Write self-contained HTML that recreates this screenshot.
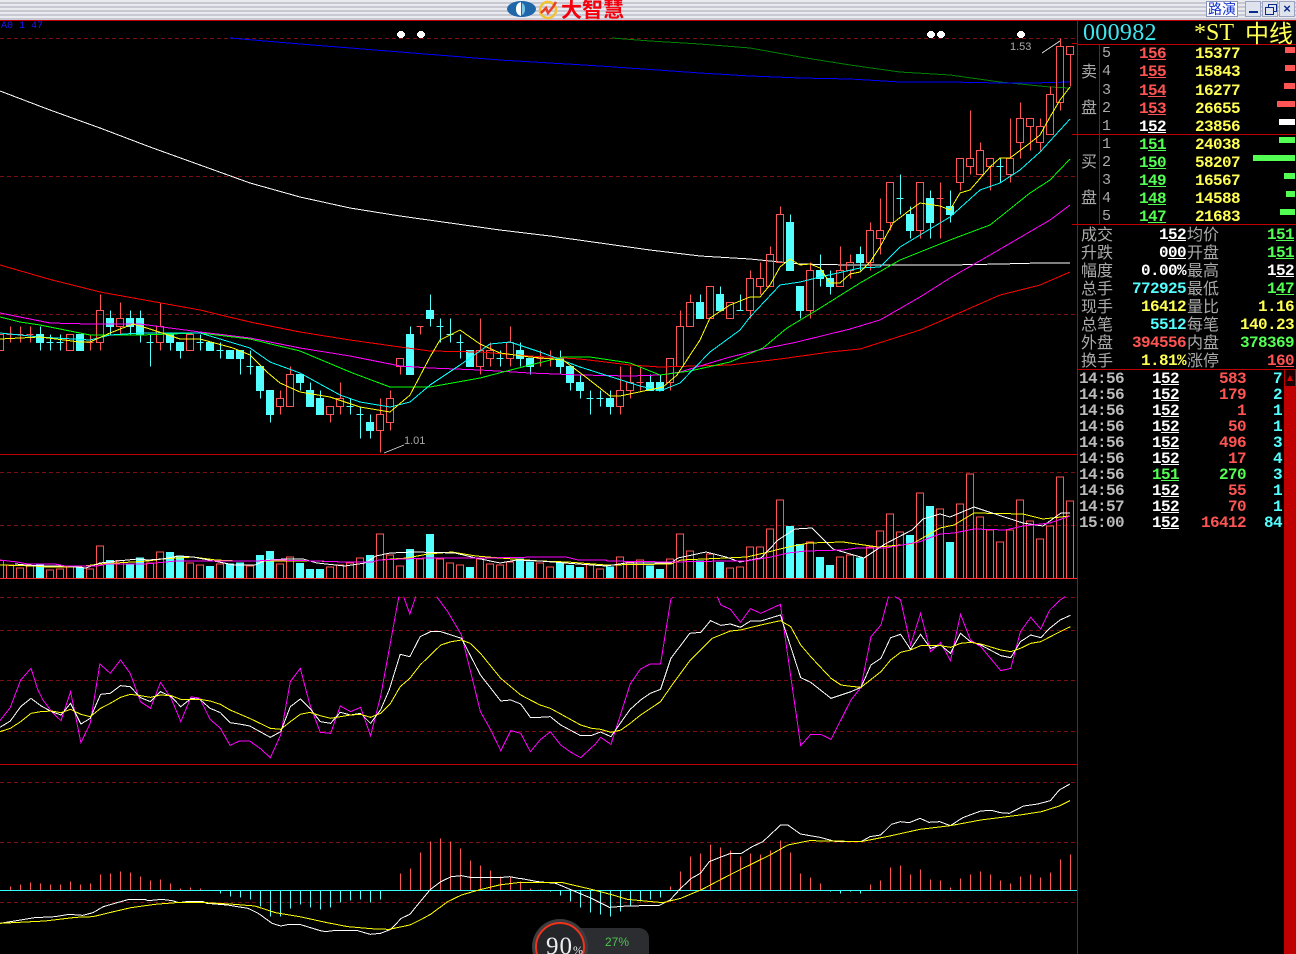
<!DOCTYPE html>
<html lang="zh">
<head>
<meta charset="utf-8">
<title>大智慧</title>
<style>
html,body{margin:0;padding:0;background:#000;width:1296px;height:954px;overflow:hidden}
#a{position:relative;width:1296px;height:954px;overflow:hidden;background:#000}
svg.c{position:absolute;left:0;top:0}
svg.c *{vector-effect:non-scaling-stroke;shape-rendering:crispEdges}
.r{fill:none;stroke:#ff5454;stroke-width:1}
.b{fill:#54ffff;stroke:#54ffff;stroke-width:1}
.l{fill:none;stroke-width:1}
.d{stroke:#7a0f0f;stroke-width:1;stroke-dasharray:4 3}
.s{stroke:#c00000;stroke-width:1}
.t{position:absolute;margin-top:1px;font:bold 16px/18px "Liberation Mono",monospace;letter-spacing:-.6px;white-space:pre}
.n{position:absolute;margin-top:1px;font:15px/18px "Liberation Mono",monospace;color:#aaa}
.h{position:absolute;margin-top:-1px;font:16px/18px "Noto Sans CJK SC",sans-serif;color:#aaa;white-space:pre}
.R{color:#ff5454}.G{color:#54ff54}.Y{color:#ffff54}.C{color:#54ffff}.W{color:#fff}.A{color:#bbb}
.q{position:absolute;height:6px;right:1px}
#tb{position:absolute;left:0;top:0;width:1296px;height:20px;background:repeating-linear-gradient(#e9e9f0 0 2px,#c7c8d2 2px 4px)}
.btn{position:absolute;top:1px;height:16px;background:#dfe3ee;border:1px solid #9aa3c0;box-sizing:border-box}
</style>
</head>
<body>
<div id="a">
<div id="tb"></div>

<svg class="c" width="1296" height="954" viewBox="0 0 1296 954">
<!-- frame -->
<path class="s" d="M0 20.5H1296M0 454.5H1077M0 764.5H1077M1077.5 20V954M1077 44.5H1296M1077 134.5H1296M1077 224.5H1296M1077 369.5H1296M1099.5 44V224"/>
<!-- dashed grids -->
<path class="d" d="M0 38.5H1077M0 176.5H1077M0 314.5H1077M0 472.5H1077M0 525.5H1077M0 597.5H1077M0 630.5H1077M0 680.5H1077M0 731.5H1077M0 782.5H1077M0 842.5H1077M0 902.5H1077"/>
<path class="s" d="M1072 43.5H1077M1072 134.5H1077M1072 224.5H1077"/>

<!-- long MAs -->
<polyline class="l" stroke="#fff" points="0,91 50,110 100,128 150,147 200,165 250,183 300,197 350,208 400,216 450,223 500,230 550,236 600,243 650,250 700,256 750,259 790,263 800,264 850,265 900,265 950,265 1000,264 1040,263 1070,263"/>
<polyline class="l" stroke="#007f00" points="612,38 650,41 700,44 750,48 800,57 850,65 900,72 950,75 1000,82 1050,87 1070,88"/>
<polyline class="l" stroke="#0000ff" points="230,38 300,44 400,52 500,60 600,66 700,73 750,76 800,78 850,79 900,82 950,82 1000,83 1033,83 1070,82"/>

<!-- candles A -->
<g transform="translate(.5,280.5) scale(.33333)">
<path class="r" d="M-12 162h21V210h-21zM18 162h21M30 138V186M48 162h21M60 138V186M78 162h21M90 138V186M198 162h21V210h-21zM258 186h21M270 162V210M288 90h21V186h-21zM300 42V90M300 186V210M348 114h21V138h-21zM360 66V114M360 138V162M468 138h21V186h-21zM480 66V138M480 186V210M558 162h21V210h-21zM828 354h21V378h-21zM840 330V354M840 378V402M858 282h21V378h-21zM870 258V282M978 378h21V402h-21zM990 402V426M1008 354h21V378h-21zM1020 306V354M1020 378V402M1128 402h21V450h-21zM1140 354V402M1140 450V516M1158 354h21V426h-21zM1170 330V354M1170 426V450M1188 234h21V258h-21zM1200 258V282M1248 138h21M1260 138V162"/>
<path class="b" d="M108 162h21V186h-21zM120 138V210M138 186h21M150 162V210M168 186h21M180 162V210M228 162h21V210h-21zM318 114h21V138h-21zM330 90V162M378 114h21V138h-21zM390 90V162M408 114h21V162h-21zM420 90V186M438 186h21M450 162V258M498 162h21V186h-21zM510 162V210M528 186h21V210h-21zM540 210V234M588 186h21M600 162V210M618 186h21V210h-21zM648 210h21M660 186V234M678 210h21V234h-21zM708 210h21V234h-21zM720 234V282M738 258h21M750 210V282M768 258h21V330h-21zM780 330V354M798 330h21V402h-21zM810 402V426M888 282h21V306h-21zM900 306V330M918 330h21V378h-21zM930 306V330M948 354h21V402h-21zM960 330V354M1038 378h21M1050 354V402M1068 402h21M1080 378V474M1098 426h21V450h-21zM1110 402V474M1218 162h21V282h-21zM1230 138V162"/>
</g>
<!-- candles B -->
<g transform="translate(430.5,280.5) scale(.33333)">
<path class="b" d="M-12 90h21V114h-21zM0 42V138M18 138h21M30 114V186M48 162h21M60 114V186M78 186h21M90 162V234M108 210h21V258h-21zM198 234h21M210 210V258M258 210h21V234h-21zM270 186V258M288 234h21V258h-21zM300 258V282M378 234h21V258h-21zM390 210V282M408 258h21V306h-21zM420 306V330M438 306h21V330h-21zM450 282V354M468 354h21M480 330V402M498 354h21M510 330V378M528 354h21V378h-21zM540 330V402M648 306h21V330h-21zM660 282V330M678 306h21V330h-21zM690 282V330M798 66h21V114h-21zM810 42V66M858 42h21V90h-21zM870 18V42M918 90h21M930 42V90"/>
<path class="r" d="M138 210h21V258h-21zM150 114V210M150 258V282M168 210h21V234h-21zM180 186V210M180 234V258M228 186h21V234h-21zM240 138V186M240 234V258M318 234h21M330 210V258M348 234h21M360 210V258M558 330h21V378h-21zM570 258V330M570 378V402M588 306h21V330h-21zM600 258V306M600 330V354M618 306h21M630 258V330M708 234h21V306h-21zM720 306V330M738 138h21V258h-21zM750 90V138M768 66h21V138h-21zM780 42V66M828 18h21V114h-21zM888 66h21V114h-21z"/>
</g>
<!-- candles C -->
<g transform="translate(750.5,20.5) scale(.33333)">
<path class="r" d="M-12 774h21V870h-21zM0 750V774M0 870V894M18 774h21V798h-21zM30 726V774M30 798V822M48 702h21V798h-21zM60 678V702M78 582h21V726h-21zM90 558V582M168 750h21V870h-21zM180 726V750M180 870V894M258 750h21V798h-21zM270 678V750M288 726h21V750h-21zM300 702V726M300 750V774M348 630h21V726h-21zM360 606V630M360 726V750M378 630h21V654h-21zM390 534V630M390 654V702M408 486h21V606h-21zM420 606V630M498 486h21V630h-21zM510 630V654M558 534h21M570 486V654M618 414h21V486h-21zM630 486V510M648 414h21V438h-21zM660 270V414M660 438V462M678 390h21V462h-21zM690 366V390M708 414h21V438h-21zM720 438V510M768 414h21V462h-21zM780 294V414M780 462V486M798 294h21V366h-21zM810 246V294M810 366V414M828 294h21V318h-21zM840 318V390M858 318h21V366h-21zM870 294V318M870 366V390M888 222h21V342h-21zM900 198V222M918 78h21V246h-21zM930 54V78M930 246V270M948 78h21V102h-21zM960 102V198"/>
<path class="b" d="M108 606h21V750h-21zM120 582V606M138 798h21V870h-21zM150 870V894M198 750h21V774h-21zM210 702V798M228 774h21V798h-21zM240 750V822M318 702h21V726h-21zM330 678V750M438 534h21M450 462V582M468 582h21V630h-21zM480 558V654M528 534h21V606h-21zM540 510V654M588 558h21V582h-21zM600 510V606M738 438h21M750 414V486"/>
</g>

<!-- MAs -->
<polyline class="l" stroke="#ff0000" points="0,265 52,280 100,292 150,301 200,310 250,322 300,332 350,340 400,347 430,351 480,352 530,356 580,359 630,365 660,367 730,365 780,359 830,352 860,349 920,330 950,317 1000,295 1040,285 1070,272"/>
<polyline class="l" stroke="#ff00ff" points="0,313 50,323 90,324 140,324 200,332 250,338 300,348 350,356 400,366 430,368 480,370 530,373 580,375 630,376 660,375 680,372 700,366 730,357 763,349 797,342 850,329 880,320 920,297 950,278 990,255 1050,220 1070,205"/>
<polyline class="l" stroke="#00ff00" points="0,317 20,322 40,325 90,335 140,335 200,333 250,339 300,351 350,372 390,387 430,387 480,378 530,365 563,357 590,357 630,363 660,375 690,371 730,362 763,348 787,328 817,310 860,283 900,260 950,240 990,225 1030,193 1050,180 1070,159"/>
<polyline class="l" stroke="#00ffff" points="0,333 40,337 90,340 110,335 140,333 200,333 250,348 270,362 300,373 340,395 360,402 390,407 410,402 430,385 460,365 490,344 510,342 540,352 580,367 640,386 660,391 680,383 710,352 740,330 750,317 780,285 800,282 820,277 860,268 880,267 900,247 950,217 980,190 1000,183 1020,170 1040,152 1070,119"/>
<polyline class="l" stroke="#ffff00" points="0,339 40,337 80,342 90,342 110,333 133,324 150,329 180,339 200,339 233,348 250,355 267,372 280,383 300,392 330,397 360,407 390,412 410,395 430,357 440,340 460,330 480,344 500,353 530,357 563,360 587,378 610,396 620,396 663,387 677,375 700,340 710,318 730,305 750,297 760,297 770,285 780,267 790,259 800,265 810,264 820,268 830,283 840,283 850,274 860,272 870,262 880,247 893,223 910,210 920,203 940,206 950,210 960,193 970,190 990,167 1000,158 1010,158 1030,143 1040,135 1050,117 1060,100 1070,87"/>

<!-- markers -->
<g fill="#fff">
<path d="M398 32h6v5h-6zM399 31h4v7h-4zM397 33h8v3h-8zM418 32h6v5h-6zM419 31h4v7h-4zM417 33h8v3h-8zM928 32h6v5h-6zM929 31h4v7h-4zM927 33h8v3h-8zM938 32h6v5h-6zM939 31h4v7h-4zM937 33h8v3h-8zM1018 32h6v5h-6zM1019 31h4v7h-4zM1017 33h8v3h-8z"/>
</g>
<path class="l" stroke="#bbb" d="M1042 53L1060 41M384 453L404 445"/>

<!-- volume -->
<g transform="translate(.5,470.5) scale(.33333)">
<path class="r" d="M-12 270h21V324h-21zM18 283h21V324h-21zM48 292h21V324h-21zM78 287h21V324h-21zM138 298h21V324h-21zM168 295h21V324h-21zM198 290h21V324h-21zM258 296h21V324h-21zM288 226h21V324h-21zM348 270h21V324h-21zM438 277h21V324h-21zM468 244h21V324h-21zM558 277h21V324h-21zM588 283h21V324h-21zM648 280h21V324h-21zM738 286h21V324h-21zM828 280h21V324h-21zM858 259h21V324h-21zM978 289h21V324h-21zM1008 283h21V324h-21zM1038 277h21V324h-21zM1068 262h21V324h-21zM1128 190h21V324h-21zM1158 253h21V324h-21zM1188 286h21V324h-21zM1248 265h21V324h-21zM1308 265h21V324h-21zM1338 277h21V324h-21zM1368 283h21V324h-21zM1428 265h21V324h-21zM1458 280h21V324h-21zM1488 283h21V324h-21zM1518 274h21V324h-21zM1608 277h21V324h-21zM1638 289h21V324h-21zM1758 280h21V324h-21zM1788 295h21V324h-21zM1848 259h21V324h-21zM1878 274h21V324h-21zM1908 268h21V324h-21zM1998 265h21V324h-21zM2028 190h21V324h-21zM2058 241h21V324h-21zM2118 250h21V324h-21zM2178 292h21V324h-21zM2208 289h21V324h-21zM2238 229h21V324h-21zM2268 229h21V324h-21zM2298 175h21V324h-21zM2328 88h21V324h-21zM2418 214h21V324h-21zM2508 259h21V324h-21zM2538 253h21V324h-21zM2598 229h21V324h-21zM2628 181h21V324h-21zM2658 130h21V324h-21zM2688 184h21V324h-21zM2748 67h21V324h-21zM2808 115h21V324h-21zM2868 100h21V324h-21zM2898 10h21V324h-21zM2928 139h21V324h-21zM2958 178h21V324h-21zM2988 214h21V324h-21zM3018 178h21V324h-21zM3048 88h21V324h-21zM3078 151h21V324h-21zM3108 205h21V324h-21zM3138 166h21V324h-21zM3168 19h21V324h-21zM3198 91h21V324h-21z"/>
<path class="b" d="M108 283h21V324h-21zM228 292h21V324h-21zM318 270h21V324h-21zM378 283h21V324h-21zM408 262h21V324h-21zM498 246h21V324h-21zM528 256h21V324h-21zM618 288h21V324h-21zM678 280h21V324h-21zM708 277h21V324h-21zM768 255h21V324h-21zM798 243h21V324h-21zM888 279h21V324h-21zM918 297h21V324h-21zM948 297h21V324h-21zM1098 255h21V324h-21zM1218 237h21V324h-21zM1278 192h21V324h-21zM1398 291h21V324h-21zM1548 265h21V324h-21zM1578 274h21V324h-21zM1668 277h21V324h-21zM1698 285h21V324h-21zM1728 291h21V324h-21zM1818 290h21V324h-21zM1938 287h21V324h-21zM1968 297h21V324h-21zM2088 271h21V324h-21zM2148 276h21V324h-21zM2358 168h21V324h-21zM2388 222h21V324h-21zM2448 261h21V324h-21zM2478 285h21V324h-21zM2568 262h21V324h-21zM2718 195h21V324h-21zM2778 108h21V324h-21zM2838 216h21V324h-21z"/>
</g>
<path stroke="#ff3030" d="M0 578.5H1077"/>
<polyline class="l" stroke="#ffff00" points="0,565 34,566 47,567 76,567 100,564 148,561 162,559 193,557 216,560 238,561 255,561 276,561 314,561 345,562 372,562 379,560 407,558 428,554 452,552 476,556 500,558 540,561 568,562 606,565 671,564 681,560 726,558 747,557 764,553 788,547 809,543 843,542 878,547 912,544 940,528 954,525 974,513 1023,514 1043,519 1070,516"/>
<polyline class="l" stroke="#ffffff" points="15,564 26,565 48,566 66,566 86,568 100,563 117,561 138,559 148,560 162,559 179,556 193,557 214,561 234,565 255,565 266,560 286,559 303,559 317,563 345,566 365,563 376,556 390,553 414,552 455,553 476,558 500,563 517,560 540,561 578,564 606,566 626,563 671,563 678,558 706,552 726,557 740,562 761,558 778,540 795,529 812,528 833,549 864,558 885,544 912,530 923,519 940,514 950,517 974,507 992,513 1023,523 1043,526 1061,513 1070,513"/>
<polyline class="l" stroke="#ff00ff" points="0,560 17,562 28,564 55,564 65,566 86,566 97,566 107,564 145,564 166,562 176,561 255,561 276,560 317,561 345,562 372,562 379,560 428,558 455,558 483,558 540,557 566,557 578,560 606,560 607,561 671,562 726,561 747,561 771,557 788,553 806,551 843,550 857,548 885,548 919,542 940,534 954,533 974,529 1005,530 1023,526 1050,523 1070,516"/>

<!-- KDJ -->
<g transform="translate(0,590) scale(.3444,.33333)">
<path class="l" stroke="#ff00ff" d="M0 392L30 352 60 270 90 235 110 300 125 330 150 365 177 392 205 305 235 458 262 400 290 222 320 250 350 210 378 250 408 335 437 355 466 277 497 325 525 395 555 320 580 325 610 388 640 415 668 466 695 453 725 453 755 475 785 503 815 435 843 275 872 235 900 345 930 427 960 430 988 348 1018 365 1047 352 1076 437 1105 320 1158 20M1172 20L1190 72 1207 20M1268 20L1300 65 1340 135 1395 365 1425 420 1454 482 1483 422 1512 430 1540 485 1568 450"/>
<path class="l" stroke="#fff" d="M0 412L30 393 60 350 90 325 118 347 150 365 177 375 205 340 235 402 262 385 292 313 320 310 350 287 378 290 408 323 437 335 466 305 497 320 525 350 555 325 580 328 610 355 640 368 668 398 695 402 725 408 785 442 815 425 843 350 872 327 900 355 930 395 960 400 988 367 1018 375 1047 370 1076 400 1105 360 1130 300 1162 193 1190 200 1220 140 1250 125 1280 125 1340 145 1395 255 1454 333 1483 330 1512 342 1540 382 1568 382"/>
<path class="l" stroke="#ffff00" d="M0 425L30 415 60 395 90 370 118 365 150 363 177 368 205 358 235 373 262 380 292 355 320 340 350 322 378 313 408 317 437 322 466 315 497 317 525 328 580 328 610 333 640 343 668 360 725 385 785 415 815 418 843 395 872 373 900 367 930 377 960 385 1018 375 1047 373 1076 382 1105 370 1134 340 1162 290 1190 265 1220 225 1250 195 1280 165 1310 155 1340 150 1365 160 1395 190 1454 265 1512 315 1568 345"/>
</g>
<g transform="translate(540,590) scale(.3444,.33333)">
<path class="l" stroke="#ff00ff" d="M0 450L30 425 60 465 90 487 118 503 160 463 176 442 206 463 235 370 262 282 292 237 320 222 350 222 380 28 388 20M515 20L525 45 553 58 582 97 611 56 641 70 698 43 757 467 786 433 815 433 845 448 903 330 932 292 961 140 990 105 1012 20M1030 20L1047 30 1076 165 1105 70 1134 185 1163 157 1192 212 1221 73 1250 150 1280 170 1338 242 1367 235 1395 125 1425 82 1454 117 1480 60 1510 30 1525 20"/>
<path class="l" stroke="#fff" d="M0 382L30 380 60 405 118 437 150 436 176 426 206 440 235 397 262 358 292 330 320 310 350 298 380 205 435 130 467 127 495 92 525 106 553 102 582 112 611 93 641 93 698 75 757 263 786 277 845 325 903 305 932 292 961 225 990 205 1018 143 1047 133 1076 178 1105 133 1134 175 1163 165 1192 190 1221 130 1250 155 1280 165 1338 197 1367 203 1395 155 1425 135 1454 143 1480 115 1510 90 1540 76"/>
<path class="l" stroke="#ffff00" d="M0 345L30 355 60 372 118 405 150 415 176 418 206 427 235 420 262 400 292 375 350 335 380 290 435 212 500 145 553 123 582 120 641 105 698 92 728 110 757 165 786 200 845 265 874 285 903 289 932 292 990 245 1018 210 1047 187 1076 180 1105 167 1163 167 1192 172 1221 160 1250 157 1280 162 1338 180 1367 185 1395 175 1425 160 1454 155 1510 125 1540 110"/>
</g>

<!-- MACD -->
<g transform="translate(.5,770.5) scale(.33333)">
<path fill="none" stroke="#ff5454" d="M30 360V348M60 360V342M90 360V336M120 360V339M150 360V342M180 360V342M210 360V333M240 360V342M270 360V339M300 360V312M330 360V309M360 360V303M390 360V306M420 360V318M450 360V330M480 360V327M510 360V339M540 360V354M570 360V351M600 360V354M1200 360V309M1230 360V294M1260 360V246M1290 360V213M1320 360V204M1350 360V213M1380 360V234M1410 360V270M1440 360V285M1470 360V300M1500 360V318M1530 360V318M1560 360V333M1590 360V354M1620 360V357M2010 360V348M2040 360V303M2070 360V258M2100 360V249M2130 360V222M2160 360V231M2190 360V240M2220 360V258M2250 360V249M2280 360V252M2310 360V240M2340 360V210M2370 360V246M2400 360V309M2430 360V321M2460 360V339M2610 360V342M2640 360V330M2670 360V291M2700 360V285M2730 360V312M2760 360V297M2790 360V327M2820 360V330M2850 360V351M2880 360V324M2910 360V312M2940 360V303M2970 360V312M3000 360V330M3030 360V339M3060 360V318M3090 360V312M3120 360V321M3150 360V306M3180 360V267M3210 360V252"/>
<path fill="none" stroke="#54ffff" d="M660 360V369M690 360V378M720 360V381M750 360V387M780 360V408M810 360V438M840 360V438M870 360V414M900 360V402M930 360V411M960 360V417M990 360V411M1020 360V396M1050 360V390M1080 360V387M1110 360V396M1140 360V387M1650 360V363M1680 360V375M1710 360V393M1740 360V411M1770 360V426M1800 360V432M1830 360V438M1860 360V423M1890 360V405M1920 360V393M1950 360V387M1980 360V381M2490 360V363M2520 360V369M2550 360V363M2580 360V369"/>
</g>
<path stroke="#33ffff" d="M0 890.5H1077"/>
<g transform="translate(0,770) scale(.3444,.33333)">
<path class="l" stroke="#fff" d="M0 460L60 450 100 443 160 440 200 433 240 436 270 428 300 410 340 398 375 388 420 388 430 392 470 388 500 392 520 398 540 395 590 395 600 400 660 405 720 415 750 430 790 460 815 468 840 463 870 463 930 482 945 485 975 481 1035 481 1075 493 1105 490 1135 478 1165 445 1190 433 1220 395 1250 358 1280 335 1310 320 1340 317 1365 322 1450 323 1480 320 1510 326"/>
<path class="l" stroke="#ffff00" d="M0 460L130 453 220 442 270 440 330 425 380 413 450 403 510 398 600 398 680 403 740 408 800 428 870 440 950 458 1010 470 1090 477 1130 478 1190 465 1220 450 1250 433 1300 395 1340 375 1390 360 1450 345 1510 337"/>
</g>
<g transform="translate(520,770) scale(.35714,.33333)">
<path class="l" stroke="#fff" d="M0 325L50 335 100 340 140 358 200 385 250 412 300 408 390 406 420 390 450 355 480 325 505 310 530 275 560 262 590 250 620 250 650 230 680 215 700 195 730 165 750 165 785 192 840 202 885 215 955 215 980 200 1010 195 1040 163 1065 155 1090 158 1120 145 1145 157 1175 155 1205 167 1240 143 1290 123 1320 121 1345 128 1370 130 1410 108 1450 102 1485 92 1510 60 1540 42"/>
<path class="l" stroke="#ffff00" d="M0 337L120 338 200 358 260 375 300 388 370 395 400 398 450 385 510 358 590 313 700 255 750 225 810 212 880 213 955 215 1035 198 1120 178 1205 167 1290 150 1400 135 1460 125 1510 108 1540 92"/>
</g>
</svg>

<!-- chart labels -->
<div style="position:absolute;left:1px;top:21px;font:10px/12px 'Liberation Mono',monospace;color:#1a1aff;white-space:pre">A0 1 47</div>
<div style="position:absolute;left:1010px;top:40px;font:11px/14px 'Liberation Sans',sans-serif;color:#aaa">1.53</div>
<div style="position:absolute;left:404px;top:434px;font:11px/14px 'Liberation Sans',sans-serif;color:#aaa">1.01</div>

<!-- title bar content -->
<svg style="position:absolute;left:505px;top:0" width="56" height="20" viewBox="0 0 56 20">
<ellipse cx="16.5" cy="9" rx="14.5" ry="8" fill="#1f67a8"/>
<path d="M16 2c-4 1-5 4-5 7s1 6 5 7z" fill="#fff"/>
<path d="M17 3c2 1 3 3 3 6s-1 5-3 6z" fill="#7cc4e8"/>
<circle cx="43" cy="10" r="8" fill="none" stroke="#f2c233" stroke-width="2.5"/>
<path d="M36 13l5-5 2 5 5-6 3-5" fill="none" stroke="#e8402a" stroke-width="2.5"/>
</svg>
<div style="position:absolute;left:561px;top:-3px;font:bold 21px/24px 'Noto Sans CJK SC',sans-serif;color:#f5000c;white-space:pre">大智慧</div>
<div class="btn" style="left:1206px;width:32px;background:#fff;border-color:#8a94b8;color:#1030d0;font:14px/14px 'Noto Sans CJK SC',sans-serif;text-align:center">路演</div>
<div class="btn" style="left:1245px;width:16px"><div style="position:absolute;left:3px;bottom:3px;width:9px;height:2px;background:#0a2a88"></div></div>
<div class="btn" style="left:1262px;width:16px"><div style="position:absolute;left:5px;top:2px;width:7px;height:6px;border:1px solid #0a2a88"></div><div style="position:absolute;left:2px;top:5px;width:7px;height:6px;border:1px solid #0a2a88;background:#dfe3ee"></div></div>
<div class="btn" style="left:1279px;width:16px;color:#0a2a88;font:bold 13px/13px 'Liberation Sans',sans-serif;text-align:center">×</div>

<!-- quote header -->
<div style="position:absolute;left:1083px;top:20px;font:24px/27px 'Liberation Serif',serif;color:#3fe6f0;letter-spacing:.3px">000982</div>
<div style="position:absolute;left:1194px;top:20px;font:24px/27px 'Liberation Serif',serif;color:#ffff54">*ST</div>
<div style="position:absolute;left:1245px;top:17px;font:24px/29px 'Noto Sans CJK SC',sans-serif;color:#ffff54;white-space:pre">中线</div>

<!-- order book -->
<div class="h" style="left:1081px;top:62px">卖</div>
<div class="h" style="left:1081px;top:98px">盘</div>
<div class="h" style="left:1081px;top:152px">买</div>
<div class="h" style="left:1081px;top:188px">盘</div>

<div class="n" style="left:1102px;top:44px">5</div><div class="t R" style="left:1139px;top:44px">1<u>56</u></div><div class="t Y" style="left:1195px;top:44px">15377</div>
<div class="n" style="left:1102px;top:62px">4</div><div class="t R" style="left:1139px;top:62px">1<u>55</u></div><div class="t Y" style="left:1195px;top:62px">15843</div>
<div class="n" style="left:1102px;top:81px">3</div><div class="t R" style="left:1139px;top:81px">1<u>54</u></div><div class="t Y" style="left:1195px;top:81px">16277</div>
<div class="n" style="left:1102px;top:99px">2</div><div class="t R" style="left:1139px;top:99px">1<u>53</u></div><div class="t Y" style="left:1195px;top:99px">26655</div>
<div class="n" style="left:1102px;top:117px">1</div><div class="t W" style="left:1139px;top:117px">1<u>52</u></div><div class="t Y" style="left:1195px;top:117px">23856</div>
<div class="n" style="left:1102px;top:135px">1</div><div class="t G" style="left:1139px;top:135px">1<u>51</u></div><div class="t Y" style="left:1195px;top:135px">24038</div>
<div class="n" style="left:1102px;top:153px">2</div><div class="t G" style="left:1139px;top:153px">1<u>50</u></div><div class="t Y" style="left:1195px;top:153px">58207</div>
<div class="n" style="left:1102px;top:171px">3</div><div class="t G" style="left:1139px;top:171px">1<u>49</u></div><div class="t Y" style="left:1195px;top:171px">16567</div>
<div class="n" style="left:1102px;top:189px">4</div><div class="t G" style="left:1139px;top:189px">1<u>48</u></div><div class="t Y" style="left:1195px;top:189px">14588</div>
<div class="n" style="left:1102px;top:207px">5</div><div class="t G" style="left:1139px;top:207px">1<u>47</u></div><div class="t Y" style="left:1195px;top:207px">21683</div>

<div class="q" style="top:47px;width:10px;background:#ff5454"></div>
<div class="q" style="top:65px;width:10px;background:#ff5454"></div>
<div class="q" style="top:83px;width:11px;background:#ff5454"></div>
<div class="q" style="top:101px;width:18px;background:#ff5454"></div>
<div class="q" style="top:119px;width:16px;background:#fff"></div>
<div class="q" style="top:137px;width:16px;background:#54ff54"></div>
<div class="q" style="top:155px;width:42px;background:#54ff54"></div>
<div class="q" style="top:173px;width:11px;background:#54ff54"></div>
<div class="q" style="top:191px;width:9px;background:#54ff54"></div>
<div class="q" style="top:209px;width:15px;background:#54ff54"></div>

<!-- info -->
<div class="h" style="left:1081px;top:225px">成交</div><div class="t W" style="right:110px;top:225px">1<u>52</u></div><div class="h" style="left:1187px;top:225px">均价</div><div class="t G" style="right:2px;top:225px">1<u>51</u></div>
<div class="h" style="left:1081px;top:243px">升跌</div><div class="t W" style="right:110px;top:243px">0<u>00</u></div><div class="h" style="left:1187px;top:243px">开盘</div><div class="t G" style="right:2px;top:243px">1<u>51</u></div>
<div class="h" style="left:1081px;top:261px">幅度</div><div class="t W" style="right:110px;top:261px">0.00%</div><div class="h" style="left:1187px;top:261px">最高</div><div class="t W" style="right:2px;top:261px">1<u>52</u></div>
<div class="h" style="left:1081px;top:279px">总手</div><div class="t C" style="right:110px;top:279px">772925</div><div class="h" style="left:1187px;top:279px">最低</div><div class="t G" style="right:2px;top:279px">1<u>47</u></div>
<div class="h" style="left:1081px;top:297px">现手</div><div class="t Y" style="right:110px;top:297px">16412</div><div class="h" style="left:1187px;top:297px">量比</div><div class="t Y" style="right:2px;top:297px">1.16</div>
<div class="h" style="left:1081px;top:315px">总笔</div><div class="t C" style="right:110px;top:315px">5512</div><div class="h" style="left:1187px;top:315px">每笔</div><div class="t Y" style="right:2px;top:315px">140.23</div>
<div class="h" style="left:1081px;top:333px">外盘</div><div class="t R" style="right:110px;top:333px">394556</div><div class="h" style="left:1187px;top:333px">内盘</div><div class="t G" style="right:2px;top:333px">378369</div>
<div class="h" style="left:1081px;top:351px">换手</div><div class="t Y" style="right:110px;top:351px">1.81%</div><div class="h" style="left:1187px;top:351px">涨停</div><div class="t R" style="right:2px;top:351px">1<u>60</u></div>

<!-- scrollbar -->
<div style="position:absolute;left:1284px;top:370px;width:12px;height:584px;background:#c00000"></div>
<div style="position:absolute;left:1285px;top:370px;width:10px;height:16px;background:#1a0000"></div>
<div style="position:absolute;left:1287px;top:375px;width:0;height:0;border-left:3px solid transparent;border-right:3px solid transparent;border-bottom:6px solid #e00000"></div>

<!-- ticks -->
<div class="t A" style="left:1079px;top:369px">14:56</div><div class="t W" style="left:1152px;top:369px">1<u>52</u></div><div class="t R" style="right:50px;top:369px">583</div><div class="t C" style="right:14px;top:369px">7</div>
<div class="t A" style="left:1079px;top:385px">14:56</div><div class="t W" style="left:1152px;top:385px">1<u>52</u></div><div class="t R" style="right:50px;top:385px">179</div><div class="t C" style="right:14px;top:385px">2</div>
<div class="t A" style="left:1079px;top:401px">14:56</div><div class="t W" style="left:1152px;top:401px">1<u>52</u></div><div class="t R" style="right:50px;top:401px">1</div><div class="t C" style="right:14px;top:401px">1</div>
<div class="t A" style="left:1079px;top:417px">14:56</div><div class="t W" style="left:1152px;top:417px">1<u>52</u></div><div class="t R" style="right:50px;top:417px">50</div><div class="t C" style="right:14px;top:417px">1</div>
<div class="t A" style="left:1079px;top:433px">14:56</div><div class="t W" style="left:1152px;top:433px">1<u>52</u></div><div class="t R" style="right:50px;top:433px">496</div><div class="t C" style="right:14px;top:433px">3</div>
<div class="t A" style="left:1079px;top:449px">14:56</div><div class="t W" style="left:1152px;top:449px">1<u>52</u></div><div class="t R" style="right:50px;top:449px">17</div><div class="t C" style="right:14px;top:449px">4</div>
<div class="t A" style="left:1079px;top:465px">14:56</div><div class="t G" style="left:1152px;top:465px">1<u>51</u></div><div class="t G" style="right:50px;top:465px">270</div><div class="t C" style="right:14px;top:465px">3</div>
<div class="t A" style="left:1079px;top:481px">14:56</div><div class="t W" style="left:1152px;top:481px">1<u>52</u></div><div class="t R" style="right:50px;top:481px">55</div><div class="t C" style="right:14px;top:481px">1</div>
<div class="t A" style="left:1079px;top:497px">14:57</div><div class="t W" style="left:1152px;top:497px">1<u>52</u></div><div class="t R" style="right:50px;top:497px">70</div><div class="t C" style="right:14px;top:497px">1</div>
<div class="t A" style="left:1079px;top:513px">15:00</div><div class="t W" style="left:1152px;top:513px">1<u>52</u></div><div class="t R" style="right:50px;top:513px">16412</div><div class="t C" style="right:14px;top:513px">84</div>

<!-- floating widget -->
<div style="position:absolute;left:580px;top:928px;width:69px;height:30px;background:#2b2d31;border-radius:0 10px 0 0"></div>
<div style="position:absolute;left:605px;top:935px;font:12px/15px 'Liberation Sans',sans-serif;color:#4fc24f">27%</div>
<div style="position:absolute;left:532px;top:919px;width:56px;height:56px;border-radius:50%;background:#3a3c40"></div>
<div style="position:absolute;left:535px;top:922px;width:50px;height:50px;border-radius:50%;background:#24262a;border:2px solid #f0321a;box-sizing:border-box"></div>
<div style="position:absolute;left:546px;top:933px;font:25px/28px 'Liberation Serif',serif;color:#eee;letter-spacing:1px;white-space:pre">90<span style="font-size:12px;letter-spacing:0">%</span></div>
</div>
</body>
</html>
